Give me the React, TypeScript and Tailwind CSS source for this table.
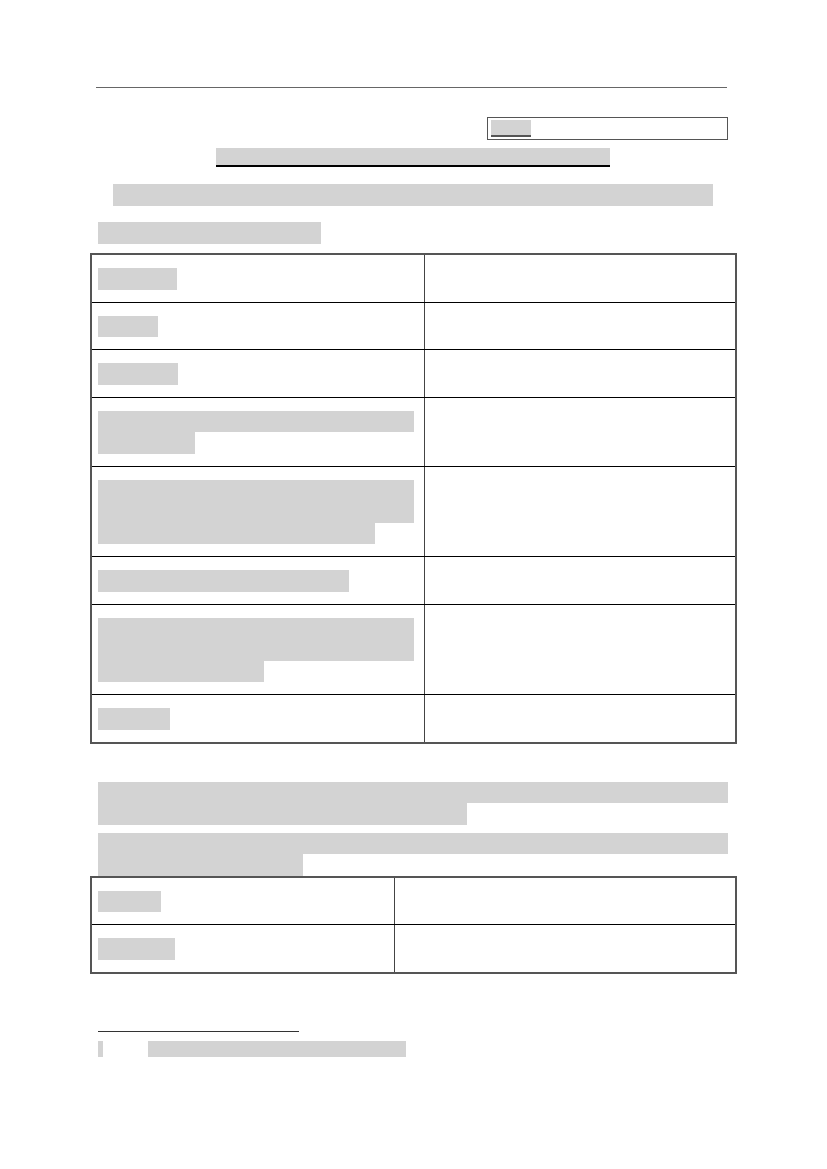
const GRAY = "bg-[#d3d3d3]";

type Row = { lines: number[] };

const ROWS: Row[] = [
  { lines: [79] },
  { lines: [60] },
  { lines: [80] },
  { lines: [316, 97] },
  { lines: [316, 316, 277] },
  { lines: [251] },
  { lines: [316, 316, 166] },
  { lines: [72] },
];

const ROWS_2: Row[] = [{ lines: [63] }, { lines: [77] }];

const Lines = ({ lines }: { lines: number[] }) => (
  <div className="flex flex-col">
    {lines.map((w, i) => (
      <div key={i} className={`h-[21.5px] ${GRAY}`} style={{ width: w }} />
    ))}
  </div>
);

const Table = ({
  rows,
  leftWidth,
  className,
}: {
  rows: Row[];
  leftWidth: number;
  className?: string;
}) => (
  <div className={`ml-[90px] w-[647px] border-2 border-[#555] ${className ?? ""}`}>
    {rows.map((row, i) => (
      <div
        key={i}
        className={`flex ${i > 0 ? "border-t border-black" : ""}`}
      >
        <div
          className="shrink-0 border-r-[1.5px] border-[#444] pl-[6px] pt-[13px] pb-[12px]"
          style={{ width: leftWidth }}
        >
          <Lines lines={row.lines} />
        </div>
        <div className="grow" />
      </div>
    ))}
  </div>
);

export default function App() {
  return (
    <div className="w-[827px] h-[1169px] bg-white overflow-hidden font-['Liberation_Sans',Arial,sans-serif]">
      <div className="pt-[87px]">
        <div className="ml-[96px] w-[631px] h-px bg-[#666]" />

        <div className="mt-[29px] ml-[487px] w-[241px] h-[23px] border border-[#555] pl-[3px] pt-[2px]">
          <div className={`w-[40px] h-[17px] ${GRAY} border-b-2 border-[#555]`} />
        </div>

        <div className={`mt-[8px] ml-[216px] w-[394px] h-[19px] ${GRAY} border-b-2 border-black`} />

        <div className={`mt-[17px] ml-[113px] w-[600px] h-[22px] ${GRAY}`} />

        <div className={`mt-[16px] ml-[98px] w-[223px] h-[22px] ${GRAY}`} />

        <Table rows={ROWS} leftWidth={333} className="mt-[9px]" />

        <div className="mt-[38px] ml-[98px]">
          <Lines lines={[630, 369]} />
        </div>
        <div className="mt-[8px] ml-[98px]">
          <Lines lines={[630, 205]} />
        </div>

        <Table rows={ROWS_2} leftWidth={303} />

        <div className="mt-[57px] ml-[98px] w-[201px] h-px bg-[#333]" />
        <div className="mt-[9px] ml-[98px] flex items-start">
          <div className={`w-[5px] h-[16px] ${GRAY}`} />
          <div className={`ml-[45px] w-[258px] h-[16px] ${GRAY}`} />
        </div>
      </div>
    </div>
  );
}
